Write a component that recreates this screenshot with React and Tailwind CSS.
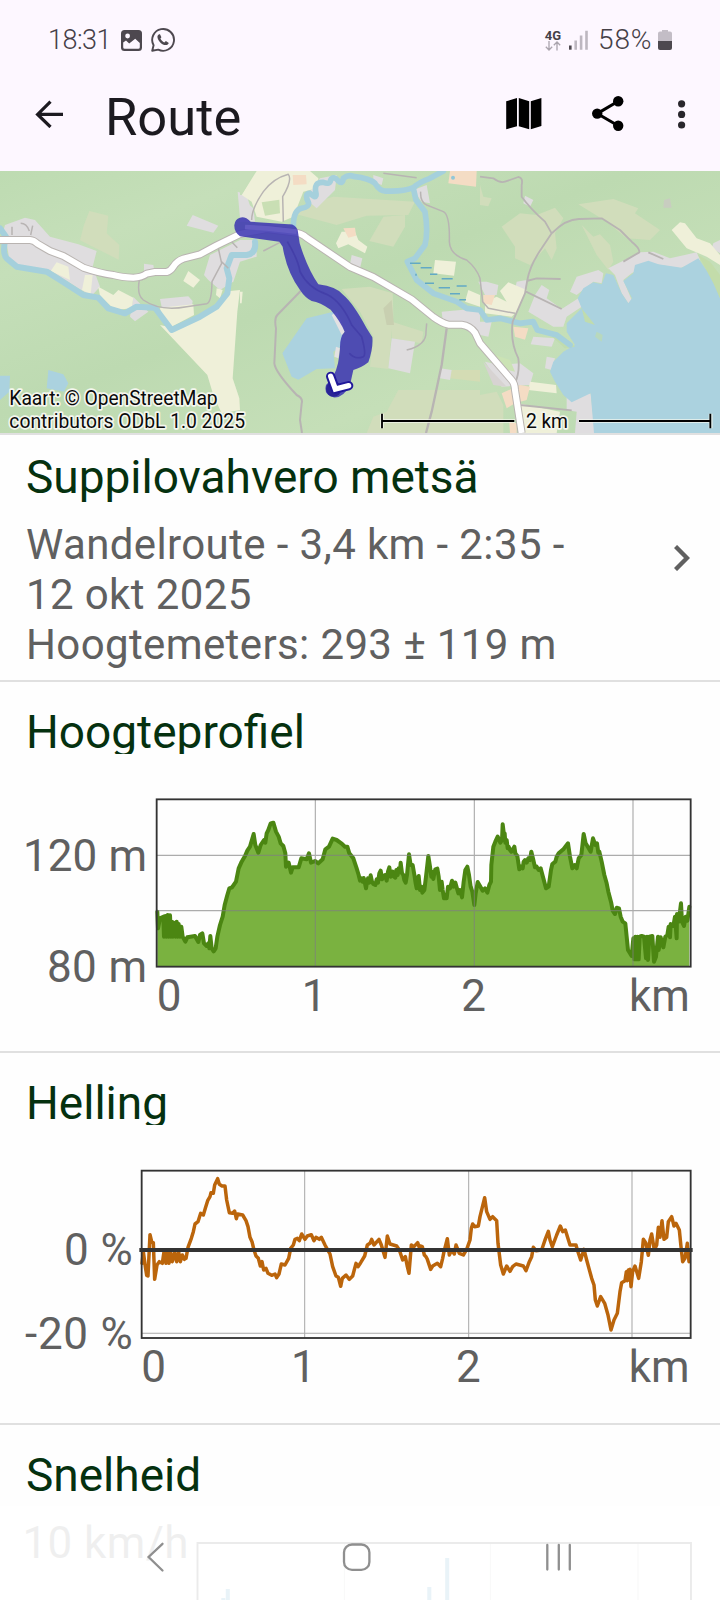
import React from "react";

const ROBOTO = "font-['Roboto',sans-serif]";

function StatusBar() {
  return (
    <div className="flex h-[80px] items-center justify-between pl-[48px] pr-[48px] text-[#454047]">
      <div className="flex items-center">
        <span className="w-[62px] whitespace-nowrap text-[27px] font-light leading-none tracking-[-0.5px]">18:31</span>
        <svg className="ml-[11px] h-[21px] w-[21px]" viewBox="0 0 21 21">
          <rect width="21" height="21" rx="3.5" fill="#4d484f" />
          <path d="M2.2 12.5 5 10.5 8.2 13.5 14.2 8.8 18.8 13V17.2Q18.8 18.8 17.2 18.8H3.8Q2.2 18.8 2.2 17.2Z" fill="#fdf7ff" />
          <circle cx="6.6" cy="6" r="2.4" fill="#fdf7ff" />
        </svg>
        <svg className="ml-[8px] h-[26px] w-[26px]" viewBox="0 0 26 26" fill="none">
          <path d="M2.2 23.8 3.6 18.2A10.9 10.9 0 1 1 8.2 22.6Z" stroke="#4d484f" strokeWidth="1.9" strokeLinejoin="round" />
          <path d="M9.2 7.2C8 7.6 7.2 8.8 7.5 10.4 8.3 14.4 12 17.7 15.7 18.1 17.2 18.2 18.4 17.3 18.8 16L15.9 14.1 14.3 15.4C12.6 14.7 11.2 13.3 10.4 11.6L11.4 10.2 10 7.2Z" fill="#4d484f" />
        </svg>
      </div>
      <div className="flex items-center">
        <div className="flex w-[18px] flex-col items-center">
          <span className="text-[13px] font-bold leading-[11px]">4G</span>
          <svg className="h-[10px] w-[16px]" viewBox="0 0 16 10" fill="none" stroke="#aaa4ad" strokeWidth="1.3">
            <path d="M4 0V9M.8 5.8 4 9 7.2 5.8M12 9.5V1M8.8 4.2 12 1 15.2 4.2" />
          </svg>
        </div>
        <svg className="ml-[7px] h-[21px] w-[20px]" viewBox="0 0 20 21">
          <rect x="0" y="15.5" width="2.6" height="4.2" fill="#4d484f" />
          <path d="M5.4 10.5H8V19.7H5.4ZM10.8 5.5H13.4V19.7H10.8ZM16.2 .8H18.8V19.7H16.2Z" fill="#bdb7c0" />
        </svg>
        <span className="ml-[9px] w-[60px] whitespace-nowrap text-[28px] font-light leading-none tracking-[0.9px]">58%</span>
        <svg className="h-[20px] w-[14px]" viewBox="0 0 14 20">
          <path d="M4 0H10V1.6H12Q14 1.6 14 3.6V11H0V3.6Q0 1.6 2 1.6H4Z" fill="#c3bdc6" />
          <path d="M0 11H14V18Q14 20 12 20H2Q0 20 0 18Z" fill="#4d484f" />
        </svg>
      </div>
    </div>
  );
}

function AppBar() {
  return (
    <div className="flex h-[91px] items-start pl-[35px] pr-[34px]">
      <svg className="mt-[20px] h-[28px] w-[29px]" viewBox="0 0 29 28" fill="none" stroke="#1c1a20" strokeWidth="3.2">
        <path d="M28 14.4H2.5M15.5 1.6 2.6 14.4 15.5 27" />
      </svg>
      <h1 className="ml-[41px] mt-[7px] flex-1 text-[52.5px] leading-[60px] text-[#1c1a20]">Route</h1>
      <svg className="mt-[18px] h-[32px] w-[36px]" viewBox="0 0 36 32">
        <path d="M.2 3.3 11 0V28.3L.2 31.3ZM12.8 0 23.2 3.3V31.3L12.8 28.3ZM24.8 3.3 35.4 0V28L24.8 31.3Z" fill="#000" />
      </svg>
      <svg className="ml-[50px] mt-[16px] h-[36px] w-[32px]" viewBox="0 0 32 36">
        <path d="M26.2 5.2 5.2 17.6 26.2 29.8" fill="none" stroke="#000" strokeWidth="3" />
        <circle cx="26.2" cy="5.2" r="5.2" />
        <circle cx="5.2" cy="17.6" r="5.2" />
        <circle cx="26.2" cy="29.8" r="5.2" />
      </svg>
      <svg className="ml-[54px] mt-[20px] h-[29px] w-[8px]" viewBox="0 0 8 29" fill="#29262c">
        <circle cx="3.6" cy="3.8" r="3.6" />
        <circle cx="3.6" cy="14.4" r="3.6" />
        <circle cx="3.6" cy="25" r="3.6" />
      </svg>
    </div>
  );
}

const TRACK =
  "M720 158Q735 153 752 170L865 178Q885 176 893 195L899 235Q922 310 955 358Q1010 365 1030 390Q1060 415 1100 490L1117 517Q1120 550 1105 592Q1085 608 1060 615L1050 660Q1030 700 1000 697Q970 690 978 660Q1004 640 1014 595Q1020 560 1020 545Q1020 515 1034 500Q1022 470 992 434Q960 412 935 408Q915 398 900 375Q860 320 848 245L838 230L720 214Q702 200 703 180Q705 162 720 158Z";

const MAIN_ROAD =
  "M0 225H90Q102 226 112 236L150 258 190 273 250 308Q300 325 340 330 365 337 400 338 425 337 440 326L465 321H500Q512 318 520 305 530 288 550 281L600 268 650 241 720 207 800 192 880 202Q905 205 920 218L1050 306 1120 336 1235 403 1300 456Q1325 474 1345 479H1385Q1410 482 1425 503L1440 535 1535 645Q1544 655 1545 675L1565 804";

function MapView() {
  return (
    <div className="relative h-[262px] overflow-hidden">
      <svg className="block h-[262px] w-[720px]" viewBox="0 18 2160 786" preserveAspectRatio="none" fill="none">
        <defs>
          <linearGradient id="relief" x1="0" y1="0" x2="1" y2="1">
            <stop offset="0" stopColor="#bddbb1" />
            <stop offset=".2" stopColor="#c5dfb9" />
            <stop offset=".45" stopColor="#bddab1" />
            <stop offset=".7" stopColor="#c5dfb8" />
            <stop offset="1" stopColor="#b9d8b0" />
          </linearGradient>
        </defs>
        <rect width="2160" height="830" fill="url(#relief)" />

        {/* fields */}
        <g fill="#d1ddbb">
          <path d="M268 138 325 152 320 205 358 240 356 284 240 226 252 180Z" />
          <path d="M1000 95 1245 110 1225 150 1100 152 1010 180 890 148 930 115Z" />
          <path d="M1150 155 1215 150 1215 185 1180 245 1108 228Z" />
          <path d="M1025 372 1110 365 1178 385 1180 450 1165 612 1110 605 1120 515 1080 440Z" />
          <path d="M1195 675H1440V804H1100L1120 755 1160 740Z" />
          <path d="M1440 690 1490 680 1510 720V804H1440Z" />
          <path d="M1440 60 1450 95 1475 100 1465 124 1440 120Z" />
          <path d="M1355 615H1440V650L1350 640Z" fill="#d4dcb4" />
          <path d="M1176 470 1270 500 1265 535 1176 520Z" />
          <path d="M1505 185 1560 145 1610 150 1665 128 1690 160 1665 205 1670 250 1655 285 1635 250 1590 300 1545 280 1545 245Z" />
          <path d="M1735 118 1840 102 1915 130 1905 145 1980 195 1950 225 1880 220 1820 170Z" />
          <path d="M1745 180 1780 215 1800 208 1830 240 1840 290 1825 315 1790 270Z" />
        </g>
        <path d="M1175 405 1182 480 1160 480 1150 430Z" fill="#c8cfb0" />

        {/* built-up land */}
        <g fill="#dfdddf">
          <path d="M15 180 75 158 105 165 150 215 235 238 290 258 278 305 300 365 275 392 235 370 150 315 30 295 20 235H0Z" />
          <path d="M578 150 655 182 640 203 560 182Z" />
          <path d="M432 296 460 300 465 330 432 330Z" />
          <path d="M630 270 720 225 770 225 770 275 720 290 700 350 660 375 625 345 612 330Z" />
          <path d="M720 95 760 130 765 170H720Z" />
          <path d="M480 402 565 394 578 408 575 428 485 426Z" />
          <path d="M400 396 445 440 405 469 390 455Z" />
          <path d="M713 80 740 90 760 155 720 160Z" />
          <path d="M960 40 1010 30 1005 75 950 130 915 100Z" />
          <path d="M1055 270 1087 280 1080 310 1050 298Z" />
          <path d="M1120 30 1150 40 1145 60 1120 50Z" />
          <path d="M1175 520 1245 530 1230 625 1165 610Z" />
          <path d="M1325 440 1440 430V530L1395 490 1330 480Z" />
          <path d="M1320 610 1355 615 1350 645 1320 640Z" />
          <path d="M1240 75 1280 60 1290 115 1265 110Z" />
          <path d="M1435 350 1460 350 1495 360 1490 390 1455 390Z" />
          <path d="M1575 92 1600 105 1590 125 1570 115Z" />
          <path d="M1440 470 1475 470 1465 515 1440 510Z" />
          <path d="M1550 350 1580 345 1575 380 1545 375Z" />
          <path d="M1625 360 1648 375 1640 400 1685 432 1735 400 1745 425 1700 455 1690 485 1660 485 1585 440 1605 390Z" />
          <path d="M1710 380 1730 335 1795 315 1810 325 1805 355 1780 350 1730 390Z" />
          <path d="M1825 310 1920 262 1960 260 2010 280 2090 262 2100 285 2040 310 1950 295 1895 325 1870 345 1895 405 1885 415 1865 385 1845 330Z" />
          <path d="M1992 105 2010 100 2015 128 1990 128Z" fill="#c8cdc0" />
          <path d="M1700 695 1772 685 1785 804H1725L1730 740 1700 735Z" />
          <path d="M1600 515 1665 520 1655 545 1592 538Z" />
          <path d="M1640 575 1665 580 1655 615 1635 610Z" />
          <path d="M1455 590 1500 600 1560 595 1600 625 1590 660 1505 665Z" />
          <path d="M2140 235 2160 225V265L2135 250Z" />
        </g>
        <path d="M1450 590 1520 665 1480 660Z" fill="#d7d3d2" />
        <path d="M1485 570 1530 585 1545 620 1500 610Z" fill="#cbe3b4" />

        {/* farmland */}
        <g fill="#eff0d9">
          <path d="M170 292 205 305 210 345 152 318Z" />
          <path d="M255 330 278 330 272 388 246 375Z" />
          <path d="M295 365 340 390 355 375 400 398 395 430 345 435 300 392Z" />
          <path d="M565 318 600 345 580 368 550 348Z" />
          <path d="M480 428 580 418 582 450 515 485 485 465Z" />
          <path d="M480 480 525 490 640 430 690 378 720 375 712 440 698 640 718 700 720 735 665 745 640 690 622 630Z" />
          <path d="M650 370 668 375 660 400 648 390Z" />
          <path d="M770 18H930L955 40 950 70 910 80 880 155 845 170 770 155 755 110 725 90Z" />
          <path d="M1025 200 1065 200 1075 225 1102 245 1095 265 1045 238 1015 250 1008 235Z" />
          <path d="M1305 285 1368 290 1362 332 1300 325Z" />
          <path d="M1405 375 1440 390V425L1395 410Z" />
          <path d="M2040 172 2055 175 2090 220 2130 235 2160 270V300L2120 275 2060 250 2015 195Z" />
          <path d="M1525 352 1580 375 1550 440 1535 455 1455 445 1455 410 1490 395 1520 410 1500 378Z" />
          <path d="M1590 650 1668 660 1670 685 1585 675Z" />
          <path d="M1555 715 1680 740 1670 804H1570Z" />
          <path d="M720 380 728 380 725 415 720 415Z" />
        </g>
        <path d="M720 18H765L725 90 720 90Z" fill="#c7dfba" />
        <path d="M785 112 838 104 840 145 795 152Z" fill="#c9dfb4" />
        <g fill="#f4dcc4">
          <path d="M1030 190 1065 188 1068 212 1045 218Z" />
          <path d="M878 30 918 30 920 58 880 60Z" />
          <path d="M1350 18H1430L1428 65 1345 55Z" />
          <path d="M1450 390 1485 390 1475 420 1450 415Z" />
          <path d="M1540 485 1585 490 1575 524 1545 515Z" />
          <path d="M1505 685 1560 660 1590 665 1580 705 1545 715 1520 730Z" />
          <path d="M1528 770 1550 775V804H1530Z" />
        </g>

        {/* lakes */}
        <g fill="#abd2df">
          <path d="M0 632H30L28 680 0 705Z" />
          <path d="M145 615 190 628 205 655 192 680 140 670Z" />
          <path d="M920 460 1000 440 1010 470 1030 500 1022 545 1000 560 1005 610 950 612 895 644 875 635 847 565Z" />
          <path d="M1733 400 1750 370 1780 352 1805 358 1818 325 1840 330 1865 385 1885 415 1896 400 1870 348 1900 325 1905 300 1945 287 1975 298 2045 308 2095 280 2115 310 2140 340 2160 400V804H1782L1772 685 1715 712 1690 690 1665 650 1650 620 1660 590 1690 560 1725 540 1700 500 1700 475 1745 430Z" />
        </g>
        <path d="M1012 440 1035 500 1025 510 995 450ZM1008 545 1020 550 1015 580 1003 575Z" fill="#e3e1e2" />
        <path d="M1745 430 1785 480 1755 470ZM1640 500 1690 515 1725 545 1695 550Z" fill="#c0dcae" />
        <path d="M1790 500 1808 510 1805 530 1785 515Z" fill="#b8d8bd" />
        <path d="M2095 270 2130 290 2160 330V400L2140 355Z" fill="#c3dcaa" />

        {/* rivers */}
        <g stroke="#a5d0dc" strokeLinejoin="round" strokeLinecap="round">
          <path d="M0 190 18 215Q5 265 20 280L50 305 140 320 180 345 250 390 295 398 325 430 375 445 410 425 465 428 485 455 515 495 600 455 650 425 682 385 688 340 680 310 695 270H740Q770 265 765 230" strokeWidth="18" />
          <path d="M880 185Q880 135 905 130 930 125 925 112 912 85 930 85 950 105 948 85 940 50 970 52 990 60 992 45 1000 30 1015 48 1028 60 1030 40 1045 28 1060 34 1110 40 1125 55 1140 80 1160 78 1210 80 1240 68 1260 50 1290 40L1330 18" strokeWidth="17" />
          <path d="M1240 70 1248 105 1275 140Q1285 200 1275 240L1245 280 1222 290 1250 345 1300 385 1370 410 1400 430 1440 435 1460 465 1500 460 1560 475 1600 470 1612 495 1670 510 1710 540" strokeWidth="17" />
        </g>
        <path d="M1230 295H1262M1262 308H1295M1290 328H1312M1325 341H1358M1248 326V332M1275 355H1302M1316 368H1350M1370 363H1400M1350 386H1380M1378 404H1398" stroke="#62a9c5" strokeWidth="4.5" />
        <circle cx="1359" cy="38" r="6" fill="#92c7d8" />

        {/* minor roads */}
        <g stroke="#b8b4b3" strokeWidth="4.5" strokeLinejoin="round">
          <path d="M418 345Q410 390 430 405Q480 440 560 425L620 416Q635 412 636 350L665 295 655 250M665 290 685 310M695 230 712 248" />
          <path d="M36 210V185M92 210 98 182M62 175Q80 175 88 198" />
          <path d="M755 165Q755 130 790 80 820 40 865 28Q878 45 848 95L850 170M790 258 840 232" />
          <path d="M902 378 832 450Q822 460 828 490L823 595Q825 620 890 690 910 700 905 715L900 765 906 804" strokeWidth="6" />
          <path d="M1150 25 1250 38M1262 80Q1260 110 1280 120L1330 140Q1350 150 1348 230 1350 270 1400 285 1430 310 1440 340L1448 410 1465 430 1545 445" />
          <path d="M1220 555Q1280 540 1278 500L1280 475" />
          <path d="M1340 490 1325 600 1295 740 1278 804" strokeWidth="7" />
          <path d="M1440 35 1480 40Q1500 55 1515 50L1555 36Q1570 38 1565 60V95Q1590 130 1635 170L1655 205M1545 655Q1560 620 1555 580 1530 530 1538 470L1575 385 1582 345Q1590 300 1625 250L1655 205Q1700 160 1740 162L1805 160 1860 195 1895 230Q1920 250 1918 262L1870 290M1945 262 1990 282M1580 348 1610 340 1682 342M1578 380 1685 432M1545 655 1560 720 1715 736" strokeWidth="5.5" />
        </g>
        <path d={MAIN_ROAD} stroke="#b9b4b1" strokeWidth="24" strokeLinejoin="round" />
        <path d={MAIN_ROAD} stroke="#fff" strokeWidth="18" strokeLinejoin="round" />

        {/* recorded track */}
        <path d={TRACK} fill="#3d38b2" fillOpacity=".88" />
        <path d="M735 186 800 190 890 200" stroke="#625bc2" strokeWidth="14" />
        <path d="M862 230Q895 285 900 320 925 370 980 388 1025 410 1055 480L1085 515Q1100 570 1090 575 1065 585 1048 565" stroke="#3932a0" strokeWidth="5" opacity=".5" />
        <circle cx="1001" cy="672" r="23" fill="#2a2496" />
        <path d="M992 634 1006 672 1046 662" stroke="#20189a" strokeWidth="28" strokeLinejoin="round" strokeLinecap="round" />
        <path d="M992 634 1006 672 1046 662" stroke="#fff" strokeWidth="16" strokeLinecap="round" />

        {/* scale */}
        <path d="M1143 768H1545M1736 768H2132M1146 746V790M2132 746V790" stroke="#f4f6ee" strokeWidth="12" opacity=".7" />
        <path d="M1146 768H1543M1737 768H2131M1146 746V790M2131 746V790" stroke="#000" strokeWidth="5.5" />
        <g fontFamily="Roboto, sans-serif" fontSize="58" fill="#0a0a0a" stroke="#f4f6ee" strokeWidth="10" strokeLinejoin="round" style={{ paintOrder: "stroke" }}>
          <text x="1578" y="789" textLength="126">2 km</text>
          <text x="28" y="721" textLength="625">Kaart: © OpenStreetMap</text>
          <text x="28" y="789" textLength="707">contributors ODbL 1.0 2025</text>
        </g>
      </svg>
    </div>
  );
}

const parse = (text, dx = 0) =>
  text.split(" ").map((p) => {
    const [x, y] = p.split(",").map(Number);
    return [x + dx, y];
  });
const join = (points) => points.map((p) => p.join(",")).join(" ");

const ALTITUDE_START =
  "52,395 54,445 60,415 70,410 72,470 76,408 79,470 83,405 86,470 90,406 93,470 96,425 99,470 102,428 106,470 110,425 113,470 116,432 120,470 124,440 128,470 136,485 142,472 165,468 175,486 180,465 187,460 192,490 200,498 205,490 208,505 211,468 215,505 221,514 227,505 232,470 240,435 248,410 254,375 262,345 268,325 276,322 288,305 296,265 305,245 315,228 322,212 330,200 341,162 346,195 355,218 362,195 372,180 376,188 380,160 385,150 392,130 400,128 408,155 416,170 422,190 430,198 436,220 438,260 446,248 453,278 458,262 476,262 484,235 500,238 507,220 513,248 525,243 535,250 548,238 556,208 567,200 578,176 590,180 604,190 615,200 622,200 628,220 640,235 650,265 656,285 660,302 664,295 668,305 671,294 675,310 678,325 681,305 684,295 688,308 692,286 696,305 700,312 706,315 710,298 714,308 718,280 722,272 726,298 730,290 735,285 740,302 744,275 748,262 752,290 758,275 762,290 766,293 769,270 773,285 776,265 780,275 782,248 786,280 790,285 793,300 797,308 801,285 807,223 812,255 818,255 824,290 827,310 830,325 833,300 836,288 840,330 844,320 847,338 853,330 858,290 865,228";
const ALTITUDE_END =
  "30,260 34,290 36,275 40,297 43,280 46,268 52,266 56,290 60,330 65,305 68,330 72,355 80,355 84,320 90,325 96,302 101,320 106,308 110,322 115,340 120,330 126,352 131,305 136,270 142,260 147,285 152,320 157,335 163,375 167,340 173,306 180,318 188,332 195,325 202,338 208,315 213,305 214,255 220,200 226,185 233,170 241,188 246,180 248,133 252,165 254,160 256,188 260,180 263,205 266,200 270,210 274,215 283,200 286,220 292,228 298,268 303,260 308,265 311,245 315,240 320,248 325,235 330,240 334,215 340,240 345,262 350,260 356,270 362,265 370,295 378,325 386,320 393,270 397,252 406,245 410,230 416,220 430,208 436,200 444,190 450,230 457,265 464,255 470,265 476,235 484,225 491,162 497,190 506,205 512,215 519,175 526,195 531,190 535,218 538,215 545,245 553,285 560,310 565,335 574,370 578,392 585,402 590,383 597,385 602,410 608,425 616,430 620,470 624,510 630,520 635,528 640,475 643,538 646,470 649,538 652,470 656,538 659,470 665,468 672,470 678,535 681,470 684,540 688,470 697,468 702,545 708,530 714,470 716,510 722,472 730,502 736,470 742,465 746,440 750,472 752,432 760,438 765,410 770,475 771,402 776,425 783,370 786,425 792,438 797,410 802,422 808,380";
const ALTITUDE_POINTS = join([...parse(ALTITUDE_START), ...parse(ALTITUDE_END, 840)]);

const SLOPE_START =
  "66,340 70,305 76,350 80,376 84,378 90,254 95,275 100,278 104,388 111,345 118,335 127,340 132,305 138,340 142,305 147,340 152,308 157,335 164,308 170,335 176,305 181,335 187,315 193,328 198,325 204,292 214,265 220,245 225,222 234,215 242,190 250,195 256,175 263,152 270,140 273,128 280,130 284,105 293,86 298,103 306,108 315,108 320,150 328,188 338,190 344,183 349,206 353,192 368,195 378,212 384,230 390,262 396,275 402,300 408,318 415,325 421,348 426,335 431,360 438,355 444,370 455,376 465,372 470,383 477,372 484,342 495,345 506,325 512,295 520,285 525,268 532,265 538,272 545,252 555,268 562,258 574,254 582,272 588,262 598,268 604,262 615,285 622,298 630,312 638,350 648,378 655,382 662,409 667,385 678,375 688,388 698,378 708,340 714,350 722,338 734,318 742,285 750,280 755,268 762,285 777,268 784,285 795,322 802,258 810,282 830,288 838,300 848,330 856,320 862,350 867,370 874,285 882,290 893,278 897,290";
const SLOPE_END =
  "31,288 37,290 43,315 48,320 52,328 62,358 68,348 82,340 92,350 98,325 102,305 112,266 118,315 125,300 133,312 138,285 148,310 160,315 170,298 180,270 184,235 188,222 194,230 205,228 210,200 224,143 230,185 240,208 248,200 260,212 264,280 272,345 280,372 290,348 300,364 308,350 318,342 340,348 348,362 358,335 365,320 370,292 378,302 395,300 405,270 415,244 420,270 427,290 440,255 451,228 458,245 466,240 480,285 498,285 502,300 512,330 522,298 530,330 545,385 552,405 556,450 562,468 572,440 584,460 594,495 603,540 612,510 622,490 630,425 635,398 645,392 649,365 652,392 655,360 658,390 660,358 663,410 668,365 675,348 686,385 694,335 700,268 708,280 715,316 720,270 725,252 733,300 740,285 745,232 750,262 756,212 762,268 770,262 775,215 785,200 792,228 798,220 808,240 813,290 818,335 825,325 832,280 837,335";
const SLOPE_POINTS = join([...parse(SLOPE_START), ...parse(SLOPE_END, 870)]);

function AltitudeChart() {
  return (
    <svg className="block h-[250px] w-[720px]" viewBox="-420 0 2160 750" fill="none">
      <polygon points={`52,560 ${ALTITUDE_POINTS} 1648,560`} fill="#7ab240" />
      <polyline points={ALTITUDE_POINTS} stroke="#4b8612" strokeWidth="12" strokeLinejoin="round" strokeLinecap="round" />
      <path d="M526 58V560M1003 58V560M1479 58V560M50 226H1652M50 392H1652" stroke="#7f7f7f" strokeOpacity=".65" strokeWidth="3.4" />
      <rect x="50" y="58" width="1602" height="502" stroke="#333" strokeWidth="5.5" />
      <g fontFamily="Roboto, sans-serif" fontSize="132" fill="#606060">
        <text x="21" y="272" textAnchor="end" textLength="372">120 m</text>
        <text x="21" y="606" textAnchor="end" textLength="300">80 m</text>
        <text x="50" y="692">0</text>
        <text x="485" y="692">1</text>
        <text x="964" y="692">2</text>
        <text x="1467" y="692">km</text>
      </g>
    </svg>
  );
}

function SlopeChart() {
  return (
    <svg className="block h-[250px] w-[720px]" viewBox="-360 0 2160 750" fill="none">
      <path d="M554 62V564M1046 62V564M1536 62V564M65 550H1712" stroke="#7f7f7f" strokeOpacity=".65" strokeWidth="3.2" />
      <polyline points={SLOPE_POINTS} stroke="#bb650b" strokeWidth="10.5" strokeLinejoin="round" strokeLinecap="round" />
      <rect x="65" y="62" width="1647" height="502" stroke="#333" strokeWidth="5.5" />
      <path d="M58 300H1718" stroke="#333" strokeWidth="11.5" />
      <g fontFamily="Roboto, sans-serif" fontSize="132" fill="#606060">
        <text x="38" y="345" textAnchor="end" textLength="206">0 %</text>
        <text x="38" y="597" textAnchor="end" textLength="323">-20 %</text>
        <text x="64" y="697">0</text>
        <text x="513" y="697">1</text>
        <text x="1008" y="697">2</text>
        <text x="1526" y="697">km</text>
      </g>
    </svg>
  );
}

function SpeedChart() {
  return (
    <svg className="block h-[88px] w-[720px]" viewBox="0 1512 720 88" fill="none">
      <path d="M344.5 1543V1600M490.5 1543V1600M638 1543V1600" stroke="#7f7f7f" strokeOpacity=".5" strokeWidth="1.1" />
      <path d="M447.2 1558V1600M429.3 1587V1600M227.8 1589V1600M223.3 1598V1600" stroke="#2384b8" strokeWidth="4" />
      <path d="M197.5 1600V1543H691V1600" stroke="#333" strokeWidth="1.9" />
      <text x="22.5" y="1557.5" textLength="166" fontFamily="Roboto, sans-serif" fontSize="44" fill="#606060">10 km/h</text>
    </svg>
  );
}

function SectionTitle({ children }) {
  return (
    <h2 className="h-[55px] overflow-hidden whitespace-nowrap pl-[26px] text-[46px] leading-[66px] text-[#05310f]">
      {children}
    </h2>
  );
}

function NavBar() {
  return (
    <div className="absolute inset-x-0 bottom-0 h-[94px] bg-white/90">
      <svg className="block h-[94px] w-[720px]" viewBox="0 1506 720 94" fill="none" stroke="#8f8f8f" strokeWidth="2.3" strokeLinecap="round">
        <path d="M162.5 1543.8 148.6 1557 162.5 1570.5" />
        <rect x="344" y="1544.5" width="25.4" height="25.4" rx="8" />
        <path d="M547.3 1545V1569.5M558.8 1545V1569.5M569.8 1545V1569.5" />
      </svg>
    </div>
  );
}

export default function App() {
  return (
    <div className={`relative flex h-[1600px] w-[720px] flex-col overflow-hidden bg-[#fefefe] ${ROBOTO}`}>
      <header className="h-[171px] shrink-0 bg-[#fdf7ff]">
        <StatusBar />
        <AppBar />
      </header>
      <MapView />
      <section className="flex h-[249px] shrink-0 items-center border-y-2 border-[#e0e0e0] pl-[26px] pr-[30px]">
        <div className="h-full flex-1 whitespace-nowrap">
          <h2 className="mt-[14px] text-[46px] leading-[56px] text-[#05310f]">Suppilovahvero metsä</h2>
          <p className="mt-[15px] text-[42px] leading-[50px] tracking-[0.38px] text-[#606060]">
            Wandelroute - 3,4 km - 2:35 -<br />12 okt 2025<br />Hoogtemeters: 293 ± 119 m
          </p>
        </div>
        <svg className="h-[26px] w-[16px]" viewBox="0 0 16 26" fill="none" stroke="#606060" strokeWidth="4.4">
          <path d="M1.5 1.5 13 13 1.5 24.5" />
        </svg>
      </section>
      <section className="h-[371px] shrink-0 border-b-2 border-[#e0e0e0] pt-[17px]">
        <SectionTitle>Hoogteprofiel</SectionTitle>
        <div className="mt-[26px]"><AltitudeChart /></div>
      </section>
      <section className="h-[372px] shrink-0 border-b-2 border-[#e0e0e0] pt-[17px]">
        <SectionTitle>Helling</SectionTitle>
        <div className="mt-[25px]"><SlopeChart /></div>
      </section>
      <section className="h-[175px] shrink-0 pt-[17px]">
        <SectionTitle>Snelheid</SectionTitle>
        <div className="mt-[15px]"><SpeedChart /></div>
      </section>
      <NavBar />
    </div>
  );
}
